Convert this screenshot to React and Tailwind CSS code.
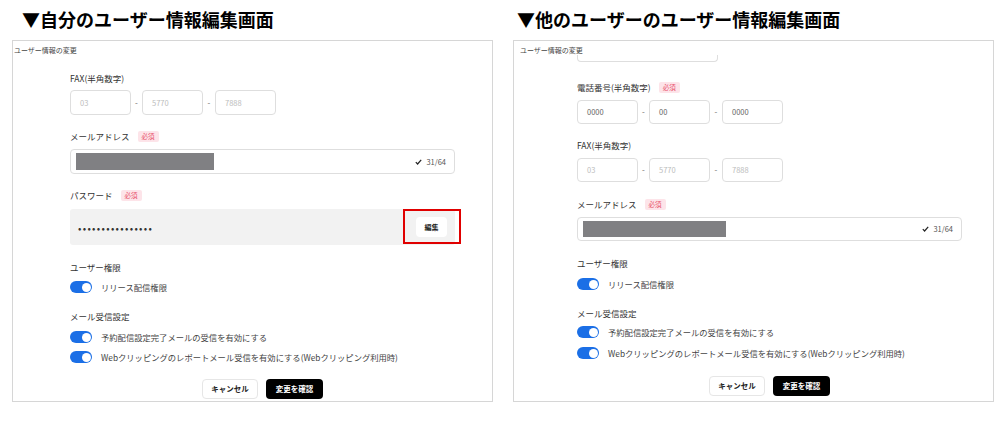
import React from 'react'

const FONT = "font-['Noto_Sans_CJK_JP','Noto_Sans',sans-serif]"

function Badge() {
  return (
    <span className="inline-flex items-center h-[11px] px-[4px] rounded-[2px] bg-[#fde4e9] text-[#e8506a] text-[6.5px] leading-none">
      必須
    </span>
  )
}

function Label({ children, required, className = '' }) {
  return (
    <div className={`flex items-center gap-[8px] h-[12px] text-[8.5px] leading-[12px] text-[#333] ${className}`}>
      <span>{children}</span>
      {required && <Badge />}
    </div>
  )
}

function TripleInput({ values, dim, h, className = '' }) {
  const txt = dim ? 'text-[#bdbdbd]' : 'text-[#666]'
  const box = `w-[61px] ${h} rounded-[4px] border border-[#dedede] flex items-center pl-[9px] text-[7.5px] ${txt}`
  return (
    <div className={`flex items-center ${className}`}>
      <div className={box}>{values[0]}</div>
      <span className="w-[11px] text-center text-[8px] text-[#666]">-</span>
      <div className={box}>{values[1]}</div>
      <span className="w-[12px] text-center text-[8px] text-[#666]">-</span>
      <div className={box}>{values[2]}</div>
    </div>
  )
}

function EmailInput({ h, blockW, blockH, className = '' }) {
  return (
    <div className={`w-[385px] ${h} rounded-[4px] border border-[#dedede] flex items-center justify-between pl-[5px] pr-[8px] ${className}`}>
      <div className={`${blockW} ${blockH} bg-[#808083]`} />
      <div className="flex items-center gap-[4px] text-[7.5px] text-[#555]">
        <svg width="7" height="6" viewBox="0 0 7 6">
          <path d="M0.8 3.2 L2.6 5 L6.2 0.8" fill="none" stroke="#222" strokeWidth="1.2" />
        </svg>
        <span>31/64</span>
      </div>
    </div>
  )
}

function Toggle({ children, className = '' }) {
  return (
    <div className={`flex items-center gap-[9px] h-[12px] ${className}`}>
      <div className="w-[22px] h-[12px] rounded-full bg-[#1b6fe6] flex items-center justify-end pr-[1.5px]">
        <div className="w-[9px] h-[9px] rounded-full bg-white" />
      </div>
      <span className="text-[8.3px] leading-[12px] text-[#444]">{children}</span>
    </div>
  )
}

function Buttons({ className = '' }) {
  return (
    <div className={`flex justify-center gap-[8px] ${className}`}>
      <div className="w-[56px] h-[20px] rounded-[4px] border border-[#e6e6e6] bg-white flex items-center justify-center text-[7.5px] font-bold text-[#222]">
        キャンセル
      </div>
      <div className="w-[57px] h-[20px] rounded-[4px] bg-black flex items-center justify-center text-[7.5px] font-bold text-white">
        変更を確認
      </div>
    </div>
  )
}

function Panel({ title, titleMl, headPl, children }) {
  return (
    <div className="w-[481px] shrink-0">
      <h2 className={`h-[40px] pt-[7px] ${titleMl} text-[18px] leading-[24px] font-bold text-black`}>{title}</h2>
      <div className="h-[362px] border border-[#d6d6d6] overflow-hidden">
        <p className={`pt-[4px] ${headPl} text-[7px] leading-[10px] text-[#444]`}>ユーザー情報の変更</p>
        {children}
      </div>
    </div>
  )
}

export default function App() {
  return (
    <div className={`w-[1000px] h-[428px] bg-white flex gap-[20px] pl-[12px] ${FONT}`}>
      {/* 自分の編集画面 */}
      <Panel title="▼自分のユーザー情報編集画面" titleMl="ml-[10px]" headPl="pl-[1px]">
        <div className="ml-[57px] w-[385px]">
          <Label className="mt-[17px]">FAX(半角数字)</Label>
          <TripleInput values={['03', '5770', '7888']} dim h="h-[25px]" className="mt-[6px]" />
          <Label required className="mt-[15px]">メールアドレス</Label>
          <EmailInput h="h-[25px]" blockW="w-[138px]" blockH="h-[17px]" className="mt-[7px]" />
          <Label required className="mt-[15px]">パスワード</Label>
          <div className="relative mt-[8px] h-[36px] rounded-[3px] bg-[#f2f2f2] flex items-center justify-between pl-[8px] pr-[8px]">
            <span className="text-[10px] tracking-[1.3px] text-[#333]">••••••••••••••••</span>
            <div className="w-[31px] h-[20px] rounded-[4px] bg-white flex items-center justify-center text-[7px] font-bold text-[#222]">
              編集
            </div>
            <div className="absolute left-[333px] top-0 w-[58px] h-[35px] border-2 border-[#e00000]" />
          </div>
          <Label className="mt-[16px]">ユーザー権限</Label>
          <Toggle className="mt-[8px]">リリース配信権限</Toggle>
          <Label className="mt-[17px]">メール受信設定</Label>
          <Toggle className="mt-[9px]">予約配信設定完了メールの受信を有効にする</Toggle>
          <Toggle className="mt-[8px]">Webクリッピングのレポートメール受信を有効にする(Webクリッピング利用時)</Toggle>
          <Buttons className="mt-[16px]" />
        </div>
      </Panel>

      {/* 他のユーザーの編集画面 */}
      <Panel title="▼他のユーザーのユーザー情報編集画面" titleMl="ml-[4px]" headPl="pl-[6px]">
        <div className="ml-[63px] w-[385px]">
          <div className="w-[141px] h-[7px] border border-t-0 border-[#dedede] rounded-b-[4px]" />
          <Label required className="mt-[19px]">電話番号(半角数字)</Label>
          <TripleInput values={['0000', '00', '0000']} h="h-[24px]" className="mt-[7px]" />
          <Label className="mt-[15px]">FAX(半角数字)</Label>
          <TripleInput values={['03', '5770', '7888']} dim h="h-[24px]" className="mt-[7px]" />
          <Label required className="mt-[16px]">メールアドレス</Label>
          <EmailInput h="h-[24px]" blockW="w-[143px]" blockH="h-[16px]" className="mt-[7px]" />
          <Label className="mt-[16px]">ユーザー権限</Label>
          <Toggle className="mt-[9px]">リリース配信権限</Toggle>
          <Label className="mt-[17px]">メール受信設定</Label>
          <Toggle className="mt-[7px]">予約配信設定完了メールの受信を有効にする</Toggle>
          <Toggle className="mt-[9px]">Webクリッピングのレポートメール受信を有効にする(Webクリッピング利用時)</Toggle>
          <Buttons className="mt-[17px]" />
        </div>
      </Panel>
    </div>
  )
}
